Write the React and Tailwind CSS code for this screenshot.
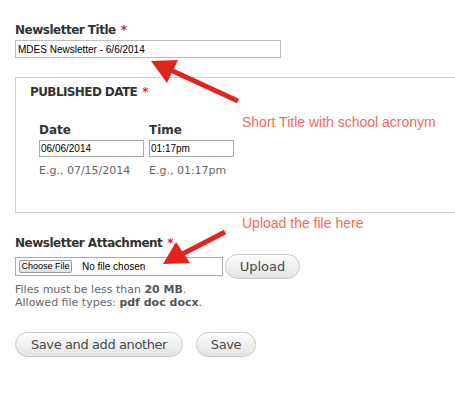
import React from 'react';

const label = "font-['DejaVu_Sans',sans-serif] font-bold text-[12px] tracking-[-0.5px] text-[#333] leading-[16px]";
const hint = "font-['DejaVu_Sans',sans-serif] text-[11px] text-[#666] leading-[13px]";
const note = "font-['Liberation_Sans',Arial,sans-serif] text-[14px] text-[#f26a5e] leading-[16px]";
const pill = "rounded-full border border-[#c8c8c8] bg-gradient-to-b from-[#fdfdfd] to-[#e3e3e3] text-[#4a4a4a] font-['DejaVu_Sans',sans-serif] shadow-[inset_0_1px_0_#fff]";

function Req() {
  return <span className="text-[#e0242a] ml-[5px]">*</span>;
}

function Arrow({ x1, y1, tip, head }) {
  return (
    <svg className="absolute left-0 top-0 pointer-events-none" width="455" height="405">
      <line x1={x1} y1={y1} x2={tip[0] + (x1 - tip[0]) * 0.2} y2={tip[1] + (y1 - tip[1]) * 0.2} stroke="#e3241d" strokeWidth="5" />
      <polygon points={`${tip[0]},${tip[1]} ${head[0]} ${head[1]}`} fill="#e3241d" />
    </svg>
  );
}

export default function App() {
  return (
    <div className="relative w-[455px] h-[405px] overflow-hidden bg-white">
      <div className="pl-[15px] pt-[22px]">
        <div className={label}>Newsletter Title<Req /></div>
        <div className="mt-[2px] w-[266px] h-[18px] border border-[#bdbdbd] pl-[2px] flex items-center font-['Liberation_Sans',Arial,sans-serif] text-[10px] text-black">
          MDES Newsletter - 6/6/2014
        </div>

        <div className="mt-[19px] w-[470px] h-[136px] border border-[#cfcfcf] pl-[14px] pt-[7px]">
          <div className="font-['DejaVu_Sans',sans-serif] font-bold text-[12px] tracking-[-0.6px] text-[#333] leading-[15px] uppercase">
            Published Date<Req />
          </div>
          <div className="mt-[23px] ml-[9px] flex gap-[5px]">
            <div className="w-[105px]">
              <div className="font-['DejaVu_Sans',sans-serif] font-bold text-[12px] text-[#333] leading-[15px]">Date</div>
              <div className="mt-[2px] w-[105px] h-[17px] border border-[#a9a9a9] pl-[1px] flex items-center font-['Liberation_Sans',Arial,sans-serif] text-[10px] text-black">06/06/2014</div>
              <div className={hint + " mt-[7px]"}>E.g., 07/15/2014</div>
            </div>
            <div className="w-[85px]">
              <div className="font-['DejaVu_Sans',sans-serif] font-bold text-[12px] text-[#333] leading-[15px]">Time</div>
              <div className="mt-[2px] w-[85px] h-[17px] border border-[#a9a9a9] pl-[1px] flex items-center font-['Liberation_Sans',Arial,sans-serif] text-[10px] text-black">01:17pm</div>
              <div className={hint + " mt-[7px] whitespace-nowrap"}>E.g., 01:17pm</div>
            </div>
          </div>
        </div>

        <div className={label + " mt-[22px]"}>Newsletter Attachment<Req /></div>
        <div className="mt-[3px] flex items-center gap-[2px]">
          <div className="w-[208px] h-[19px] border border-[#aaa] flex items-center pl-[3px] gap-[10px]">
            <div className="h-[13px] w-[53px] border border-[#999] rounded-[2px] bg-gradient-to-b from-white to-[#e2e2e2] flex items-center justify-center font-['Liberation_Sans',Arial,sans-serif] text-[9px] text-black">Choose File</div>
            <span className="font-['Liberation_Sans',Arial,sans-serif] text-[10px] text-black">No file chosen</span>
          </div>
          <button className={pill + " w-[75px] h-[25px] text-[13px]"}>Upload</button>
        </div>
        <div className={hint + " mt-[4px]"}>Files must be less than <b className="text-[#555]">20 MB</b>.</div>
        <div className={hint}>Allowed file types: <b className="text-[#555]">pdf doc docx</b>.</div>

        <div className="mt-[23px] flex gap-[13px]">
          <button className={pill + " w-[168px] h-[25px] text-[13px] tracking-[-0.4px]"}>Save and add another</button>
          <button className={pill + " w-[60px] h-[25px] text-[13px] tracking-[-0.4px]"}>Save</button>
        </div>
      </div>

      <div className={note + " absolute left-[242px] top-[114px]"}>Short Title with school acronym</div>
      <div className={note + " absolute left-[242px] top-[215px]"}>Upload the file here</div>

      <Arrow x1={238} y1={101} tip={[151, 61]} head={["178,60", "167,83"]} />
      <Arrow x1={225} y1={232} tip={[163, 264]} head={["176,242", "190,263"]} />
    </div>
  );
}
